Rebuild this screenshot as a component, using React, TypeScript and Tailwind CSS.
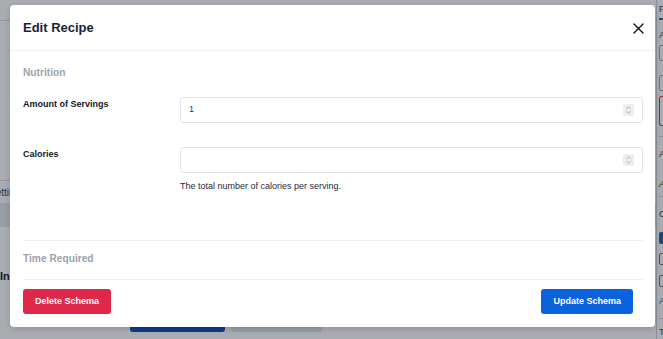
import React from "react";

function Spinner() {
  return (
    <div className="w-[11px] h-[12px] rounded-[2px] bg-[#eceef1] flex items-center justify-center">
      <svg width="7" height="10" viewBox="0 0 7 10" fill="none">
        <path d="M1.5 3.8 3.5 1.8 5.5 3.8" stroke="#a3a8b0" strokeWidth="0.9" strokeLinecap="round" strokeLinejoin="round" />
        <path d="M1.5 6.2 3.5 8.2 5.5 6.2" stroke="#a3a8b0" strokeWidth="0.9" strokeLinecap="round" strokeLinejoin="round" />
      </svg>
    </div>
  );
}

function NumberInput({ value }: { value?: string }) {
  return (
    <div className="h-[26px] w-full rounded-[3px] border border-[#e3e5e9] bg-white flex items-center pl-[8px] pr-[8px]">
      <span className="flex-1 text-[9px] text-[#2f3f57]">{value}</span>
      <Spinner />
    </div>
  );
}

function BackgroundPage() {
  return (
    <div className="flex h-[339px] w-[663px] overflow-hidden bg-white">
      <main className="w-[656px] shrink-0 flex flex-col overflow-hidden">
        <div className="h-[21px] border-b border-[#d9dce1]" />
        <div className="h-[159px]" />
        <div className="h-[23px] border-t border-[#d9dce1] flex items-center">
          <span className="-ml-[11px] whitespace-nowrap text-[10px] text-[#374151]">Settings</span>
        </div>
        <div className="h-[24px] bg-[#e6e8ec]" />
        <div className="h-[42px]" />
        <div className="text-[11px] font-bold text-[#111827] leading-[14px]">Ingredients</div>
        <div className="flex-1" />
        <div className="flex gap-[6px] pl-[130px] mb-[7px]">
          <div className="w-[95px] h-[28px] rounded-[3px] bg-[#0a4fc2]" />
          <div className="w-[91px] h-[28px] rounded-[3px] bg-[#e5e7eb]" />
        </div>
      </main>
      <aside className="w-[200px] shrink-0 border-l border-[#d1d5db] pl-[2px] flex flex-col text-[9px] text-[#374151]">
        <div className="h-[16px] flex items-end">P</div>
        <div className="h-[4px] border-b-2 border-[#1d6fb8] w-[40px]" />
        <div className="mt-[10px] leading-[10px]">A</div>
        <div className="mt-[5px] h-[16px] w-[60px] rounded-[2px] border border-[#9ca3af]" />
        <div className="mt-[14px] h-[16px] w-[60px] rounded-[2px] border border-[#9ca3af]" />
        <div className="mt-[5px] h-[30px] w-[60px] rounded-[2px] border border-[#e0294a]" />
        <div className="mt-[10px] border-b border-[#d1d5db]" />
        <div className="mt-[12px] leading-[10px]">A</div>
        <div className="mt-[20px] leading-[10px] italic">A</div>
        <div className="mt-[7px] border-b border-[#d1d5db]" />
        <div className="mt-[12px] leading-[10px]">C</div>
        <div className="mt-[13px] h-[12px] w-[12px] rounded-[2px] bg-[#1666b0]" />
        <div className="mt-[9px] h-[12px] w-[12px] rounded-[2px] border border-[#6b7280]" />
        <div className="mt-[10px] h-[12px] w-[12px] rounded-[2px] border border-[#6b7280]" />
        <div className="mt-[9px] leading-[10px] text-[#1d6fb8]">A</div>
        <div className="mt-[12px] border-b border-[#d1d5db]" />
        <div className="mt-[8px] leading-[10px]">T</div>
      </aside>
    </div>
  );
}

export default function App() {
  return (
    <div className="relative h-[339px] w-[663px] overflow-hidden font-['Liberation_Sans',Arial,sans-serif]">
      <BackgroundPage />

      {/* Modal overlay */}
      <div className="absolute inset-0 bg-[#111827]/[0.36] pt-[5px] pl-[10px]">
        <div className="w-[645px] h-[322px] rounded-[4px] bg-white shadow-[0_2px_6px_rgba(0,0,0,0.15)] flex flex-col overflow-hidden">
          {/* Header */}
          <div className="h-[46px] shrink-0 border-b border-[#eef0f2] flex items-center pl-[13px] pr-[11px]">
            <h2 className="flex-1 text-[13px] font-bold text-[#1a1f36]">Edit Recipe</h2>
            <button className="w-[11px] h-[11px] mt-[1px] flex items-center justify-center">
              <svg width="11" height="11" viewBox="0 0 11 11" fill="none">
                <path d="M1 1 10 10M10 1 1 10" stroke="#111111" strokeWidth="1.4" strokeLinecap="round" />
              </svg>
            </button>
          </div>

          {/* Body */}
          <div className="h-[232px] shrink-0 overflow-hidden pl-[13px] pr-[12px]">
            <div className="pt-[15px] text-[10.2px] font-bold text-[#9ca3af] leading-[14px]">Nutrition</div>

            <div className="mt-[17px] flex">
              <div className="w-[157px] shrink-0 pt-[1px] text-[9px] font-bold text-[#111827] leading-[12px]">
                Amount of Servings
              </div>
              <div className="flex-1">
                <NumberInput value="1" />
              </div>
            </div>

            <div className="mt-[24px] flex">
              <div className="w-[157px] shrink-0 pt-[1px] text-[9px] font-bold text-[#111827] leading-[12px]">
                Calories
              </div>
              <div className="flex-1">
                <NumberInput />
                <p className="mt-[7px] text-[9px] text-[#1f2937] leading-[12px]">
                  The total number of calories per serving.
                </p>
              </div>
            </div>

            <div className="mt-[48px] border-t border-[#eceef1]" />
            <div className="mt-[11px] text-[10.2px] font-bold text-[#9ca3af] leading-[14px]">Time Required</div>
            <div className="mt-[13px] border-t border-[#eceef1]" />
          </div>

          {/* Footer */}
          <div className="flex-1 flex items-start justify-between pt-[6px] pl-[13px] pr-[22px]">
            <button className="h-[25px] px-[12px] rounded-[3px] bg-[#e0294a] text-white text-[9px] font-bold">
              Delete Schema
            </button>
            <button className="h-[25px] px-[12px] rounded-[3px] bg-[#0a62dd] text-white text-[9px] font-bold">
              Update Schema
            </button>
          </div>
        </div>
      </div>
    </div>
  );
}
